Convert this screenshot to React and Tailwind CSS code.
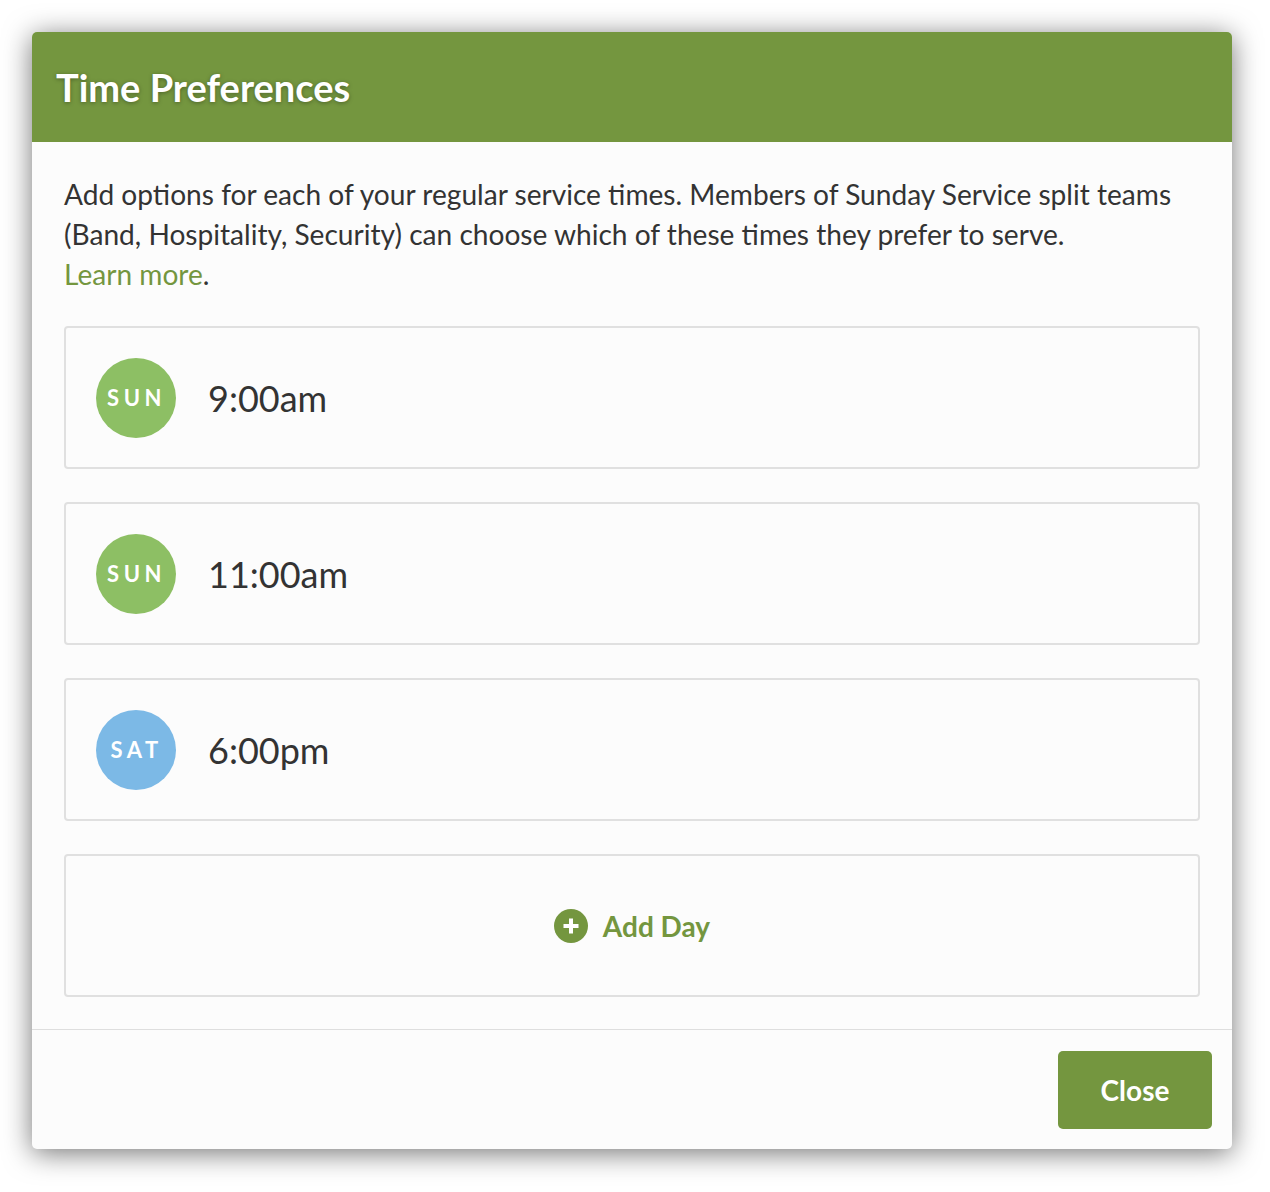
import React from "react";

const times = [
  { day: "SUN", time: "9:00am", color: "bg-[#8dbf64]" },
  { day: "SUN", time: "11:00am", color: "bg-[#8dbf64]" },
  { day: "SAT", time: "6:00pm", color: "bg-[#7cb9e6]" },
];

const PlusCircle = () => (
  <svg width="34" height="34" viewBox="0 0 34 34">
    <circle cx="17" cy="17" r="17" fill="#74963f" />
    <path d="M17 9.5v15M9.5 17h15" stroke="#fff" strokeWidth="4" />
  </svg>
);

export default function App() {
  return (
    <div className="min-h-[1192px] bg-white p-8 font-['Lato','Open_Sans',sans-serif]">
      <div className="w-[1200px] rounded-[5px] bg-[#fcfcfc] shadow-[0_4px_28px_rgba(0,0,0,0.55)] overflow-hidden">
        {/* Header */}
        <div className="h-[110px] bg-[#74963f] flex items-center px-6">
          <h1 className="text-[38px] font-bold text-white [text-shadow:0_1px_4px_rgba(0,0,0,0.35)]">
            Time Preferences
          </h1>
        </div>

        {/* Body */}
        <div className="px-8 pt-8 pb-8 border-b border-[#dedede]">
          <p className="text-[28.1px] leading-[40px] text-[#333]">
            Add options for each of your regular service times. Members of Sunday Service split teams (Band,
            Hospitality, Security) can choose which of these times they prefer to serve.
            <br />
            <span className="text-[#74963f]">Learn more</span>.
          </p>

          <div className="mt-[32px] flex flex-col gap-[33px]">
            {times.map((t, i) => (
              <div
                key={i}
                className="h-[143px] rounded-[4px] border-2 border-[#e0e0e0] bg-[#fcfcfc] flex items-center pl-[30px]"
              >
                <div
                  className={`w-20 h-20 rounded-full ${t.color} flex items-center justify-center text-white text-[22px] font-bold tracking-[4.5px] pl-[1px]`}
                >
                  {t.day}
                </div>
                <span className="ml-8 text-[36px] text-[#333]">{t.time}</span>
              </div>
            ))}
            <div className="h-[143px] rounded-[4px] border-2 border-[#e0e0e0] bg-[#fcfcfc] flex items-center justify-center gap-[15px]">
              <PlusCircle />
              <span className="text-[28px] font-bold text-[#74963f]">Add Day</span>
            </div>
          </div>
        </div>

        {/* Footer */}
        <div className="flex justify-end px-5 pt-[21px] pb-5">
          <button className="w-[154px] h-[78px] rounded-[5px] bg-[#74963f] text-white text-[28px] font-bold">
            Close
          </button>
        </div>
      </div>
    </div>
  );
}
